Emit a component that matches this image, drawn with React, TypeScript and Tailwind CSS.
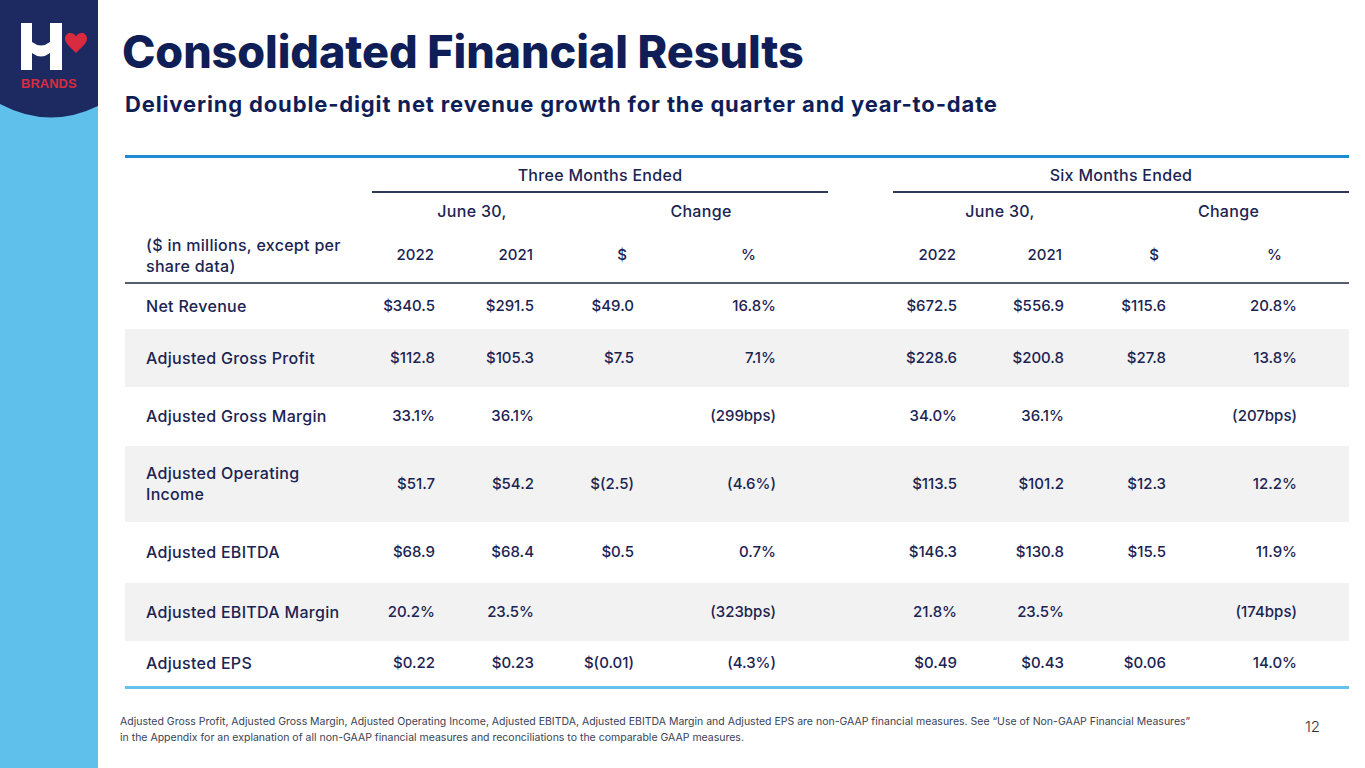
import React from "react";

const COLS = "247px 63px 99px 100px 142px 52px 65px 64px 107px 102px 131px 52px";

type Row = {
  label: React.ReactNode;
  vals: string[];
  h: string;
  shade?: boolean;
};

const rows: Row[] = [
  { label: "Net Revenue", vals: ["$340.5", "$291.5", "$49.0", "16.8%", "$672.5", "$556.9", "$115.6", "20.8%"], h: "h-[45px]" },
  { label: "Adjusted Gross Profit", vals: ["$112.8", "$105.3", "$7.5", "7.1%", "$228.6", "$200.8", "$27.8", "13.8%"], h: "h-[58px]", shade: true },
  { label: "Adjusted Gross Margin", vals: ["33.1%", "36.1%", "", "(299bps)", "34.0%", "36.1%", "", "(207bps)"], h: "h-[59px]" },
  {
    label: (
      <>
        Adjusted Operating
        <br />
        Income
      </>
    ),
    vals: ["$51.7", "$54.2", "$(2.5)", "(4.6%)", "$113.5", "$101.2", "$12.3", "12.2%"],
    h: "h-[76px]",
    shade: true,
  },
  { label: "Adjusted EBITDA", vals: ["$68.9", "$68.4", "$0.5", "0.7%", "$146.3", "$130.8", "$15.5", "11.9%"], h: "h-[61px]" },
  { label: "Adjusted EBITDA Margin", vals: ["20.2%", "23.5%", "", "(323bps)", "21.8%", "23.5%", "", "(174bps)"], h: "h-[58px]", shade: true },
  { label: "Adjusted EPS", vals: ["$0.22", "$0.23", "$(0.01)", "(4.3%)", "$0.49", "$0.43", "$0.06", "14.0%"], h: "h-[45px]" },
];

function Logo() {
  return (
    <div className="relative h-[124px] w-[98px]">
      <svg width="98" height="124" viewBox="0 0 98 124" className="block">
        <path d="M0 0 H98 V106 Q49 130 0 104 Z" fill="#1c2a61" />
        <path d="M21 23 H32 V70 H21 Z M50 23 H62 V70 H50 Z" fill="#ffffff" />
        <path d="M32 42 Q41 49 50 42 L50 53 Q41 60 32 53 Z" fill="#ffffff" />
        <path
          d="M76 53 C70 47 65 43 65 38.5 C65 35 67.5 33 70.5 33 C73 33 75 34.5 76 36.5 C77 34.5 79 33 81.5 33 C84.5 33 87 35 87 38.5 C87 43 82 47 76 53 Z"
          fill="#d92b3f"
        />
      </svg>
      <span className="absolute left-[21px] top-[76px] font-['Liberation_Sans',sans-serif] text-[13px] font-bold leading-[16px] text-[#d92b3f]">
        BRANDS
      </span>
    </div>
  );
}

function Num({ v, pr = "pr-0" }: { v: string; pr?: string }) {
  return <div className={`flex items-center justify-end ${pr}`}>{v}</div>;
}

export default function App() {
  return (
    <div className="flex h-[768px] w-[1365px] overflow-hidden bg-white font-['Inter',sans-serif] text-[#1b2452]">
      <aside className="h-full w-[98px] shrink-0 bg-[#60c0ec]">
        <Logo />
      </aside>

      <main className="flex flex-1 flex-col pl-[22px]">
        <h1 className="ml-[2px] mt-[26px] text-[45px] font-extrabold leading-[52px] tracking-[-0.1px] text-[#101e57]">
          Consolidated Financial Results
        </h1>
        <p className="ml-[5px] mt-[13px] text-[22px] font-bold leading-[26px] tracking-[0.85px] text-[#101e57]">
          Delivering double-digit net revenue growth for the quarter and year-to-date
        </p>

        <div className="ml-[5px] mt-[38px] w-[1224px] border-t-[3px] border-[#1e8ad4] text-[15px] font-medium">
          {/* period headers */}
          <div className="grid h-[35px] text-[16px] tracking-[0.3px]" style={{ gridTemplateColumns: COLS }}>
            <div />
            <div className="col-span-5 flex items-center justify-center border-b-2 border-[#2f3858]">Three Months Ended</div>
            <div />
            <div className="col-span-5 flex items-center justify-center border-b-2 border-[#2f3858]">Six Months Ended</div>
          </div>
          <div className="grid h-[36px] text-[16px] tracking-[0.3px]" style={{ gridTemplateColumns: COLS }}>
            <div />
            <div className="col-span-2 flex items-center justify-center pl-[38px]">June 30,</div>
            <div className="col-span-3 flex items-center justify-center pl-[40px]">Change</div>
            <div />
            <div className="col-span-2 flex items-center justify-center pl-[43px]">June 30,</div>
            <div className="col-span-3 flex items-center justify-center pl-[44px]">Change</div>
          </div>
          <div className="grid h-[55px] border-b-2 border-[#575d6f]" style={{ gridTemplateColumns: COLS }}>
            <div className="flex items-center pl-[21px] text-[16px] leading-[21px] tracking-[0.3px]">
              <span>
                ($ in millions, except per
                <br />
                share data)
              </span>
            </div>
            <Num v="2022" pr="pr-[1px]" />
            <Num v="2021" pr="pr-[1px]" />
            <Num v="$" pr="pr-[7px]" />
            <Num v="%" pr="pr-[20px]" />
            <div />
            <div />
            <Num v="2022" pr="pr-[1px]" />
            <Num v="2021" pr="pr-[2px]" />
            <Num v="$" pr="pr-[7px]" />
            <Num v="%" pr="pr-[15px]" />
            <div />
          </div>

          {rows.map((r, i) => (
            <div
              key={i}
              className={`grid ${r.h} ${r.shade ? "bg-[#f2f2f2]" : ""}`}
              style={{ gridTemplateColumns: COLS }}
            >
              <div className="flex items-center pl-[21px] text-[16px] leading-[21px] tracking-[0.3px]">
                <span>{r.label}</span>
              </div>
              <Num v={r.vals[0]} />
              <Num v={r.vals[1]} />
              <Num v={r.vals[2]} />
              <Num v={r.vals[3]} />
              <div />
              <div />
              <Num v={r.vals[4]} />
              <Num v={r.vals[5]} />
              <Num v={r.vals[6]} />
              <Num v={r.vals[7]} />
              <div />
            </div>
          ))}
          <div className="h-[3px] bg-[#66c1ec]" />
        </div>

        <div className="mt-[25px] flex items-start justify-between pr-[45px]">
          <p className="ml-0 text-[10.5px] leading-[16px] text-[#3a3f56]">
            Adjusted Gross Profit, Adjusted Gross Margin, Adjusted Operating Income, Adjusted EBITDA, Adjusted EBITDA Margin and Adjusted EPS are non-GAAP financial measures. See “Use of Non-GAAP Financial Measures”
            <br />
            in the Appendix for an explanation of all non-GAAP financial measures and reconciliations to the comparable GAAP measures.
          </p>
          <span className="mt-[3px] text-[15px] font-light leading-[20px] text-[#333333]">12</span>
        </div>
      </main>
    </div>
  );
}
